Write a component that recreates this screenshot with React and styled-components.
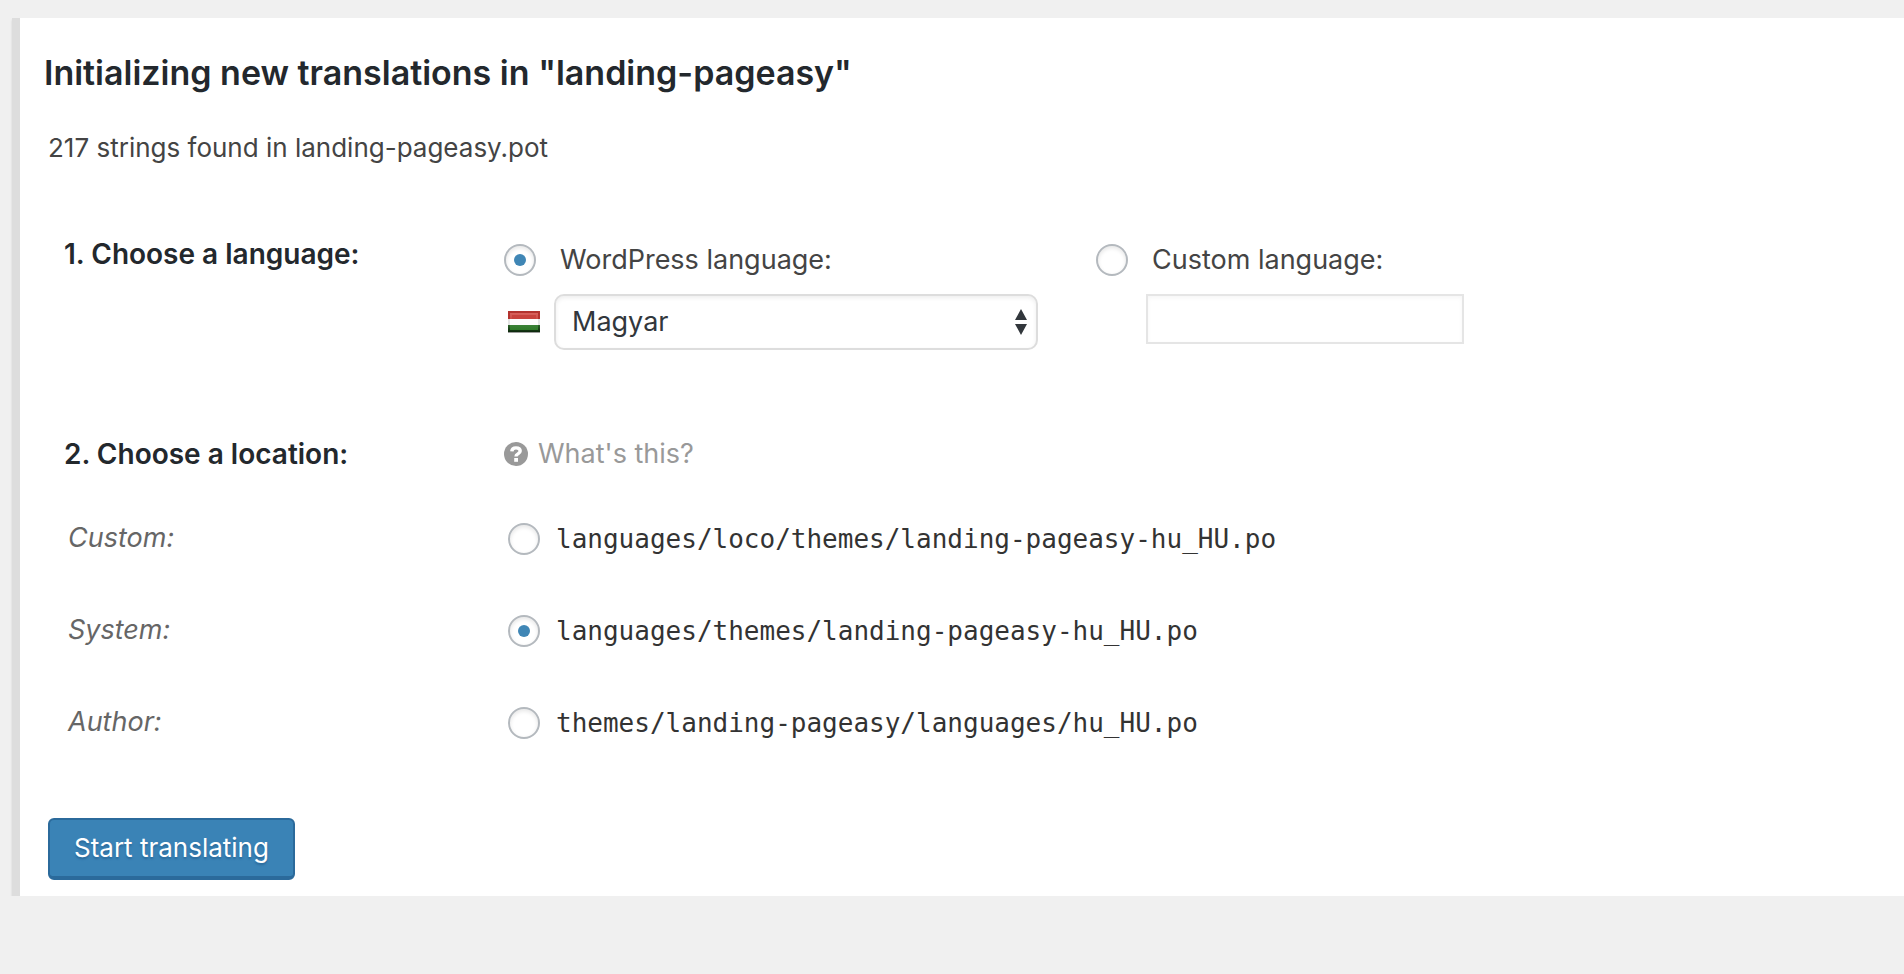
import { useState } from "react";
import styled, { createGlobalStyle } from "styled-components";

const LANGUAGES = [
  { code: "hu_HU", name: "Magyar" },
  { code: "de_DE", name: "Deutsch" },
  { code: "fr_FR", name: "Français" },
];

const App = () => {
  const [source, setSource] = useState("wordpress");
  const [locale, setLocale] = useState("hu_HU");
  const [custom, setCustom] = useState("");
  const [location, setLocation] = useState("system");

  const code = source === "custom" ? custom : locale;

  const locations = [
    {
      id: "custom",
      title: "Custom:",
      path: `languages/loco/themes/landing-pageasy-${code}.po`,
    },
    {
      id: "system",
      title: "System:",
      path: `languages/themes/landing-pageasy-${code}.po`,
    },
    {
      id: "author",
      title: "Author:",
      path: `themes/landing-pageasy/languages/${code}.po`,
    },
  ];

  return (
    <>
      <GlobalStyle />
      <Panel>
        <Title>Initializing new translations in "landing-pageasy"</Title>
        <Summary>217 strings found in landing-pageasy.pot</Summary>

        <form onSubmit={(event) => event.preventDefault()}>
          <LanguageSection>
            <SectionTitle>1. Choose a language:</SectionTitle>
            <Choices>
              <Choice>
                <RadioLabel>
                  <Radio
                    name="source"
                    checked={source === "wordpress"}
                    onChange={() => setSource("wordpress")}
                  />
                  WordPress language:
                </RadioLabel>
                <SelectRow>
                  <Flag />
                  <SelectWrap>
                    <Select
                      aria-label="WordPress language"
                      value={locale}
                      onChange={(event) => setLocale(event.target.value)}
                    >
                      {LANGUAGES.map((language) => (
                        <option key={language.code} value={language.code}>
                          {language.name}
                        </option>
                      ))}
                    </Select>
                    <Arrows />
                  </SelectWrap>
                </SelectRow>
              </Choice>
              <Choice>
                <RadioLabel>
                  <Radio
                    name="source"
                    checked={source === "custom"}
                    onChange={() => setSource("custom")}
                  />
                  Custom language:
                </RadioLabel>
                <TextInput
                  type="text"
                  aria-label="Custom language"
                  value={custom}
                  onChange={(event) => setCustom(event.target.value)}
                />
              </Choice>
            </Choices>
          </LanguageSection>

          <LocationHeader>
            <SectionTitle>2. Choose a location:</SectionTitle>
            <HelpLink href="#help">
              <HelpIcon />
              What's this?
            </HelpLink>
          </LocationHeader>

          <Locations>
            {locations.map(({ id, title, path }) => (
              <LocationRow key={id}>
                <LocationName htmlFor={`location-${id}`}>{title}</LocationName>
                <PathLabel>
                  <Radio
                    id={`location-${id}`}
                    name="location"
                    checked={location === id}
                    onChange={() => setLocation(id)}
                  />
                  <Code>{path}</Code>
                </PathLabel>
              </LocationRow>
            ))}
          </Locations>

          <Submit type="submit">Start translating</Submit>
        </form>
      </Panel>
    </>
  );
};

export default App;

const Flag = () => (
  <svg width="32" height="22" viewBox="0 0 32 22" role="img" aria-label="hu">
    <defs>
      <linearGradient id="red" x1="0" y1="0" x2="0" y2="1">
        <stop offset="0" stopColor="#d8625c" />
        <stop offset="1" stopColor="#cc4a44" />
      </linearGradient>
      <linearGradient id="green" x1="0" y1="0" x2="0" y2="1">
        <stop offset="0" stopColor="#3b8236" />
        <stop offset="1" stopColor="#2f7a2a" />
      </linearGradient>
      <linearGradient id="edge" x1="0" y1="0" x2="0" y2="1">
        <stop offset="0" stopColor="#2c6428" />
        <stop offset="1" stopColor="#0c260c" />
      </linearGradient>
    </defs>
    <rect width="32" height="8" fill="#b3332e" />
    <rect x="2" y="2" width="28" height="6" fill="url(#red)" />
    <rect x="4" y="4" width="24" height="4" fill="#c8433d" />
    <rect y="8" width="32" height="6" fill="#fdfdfd" />
    <rect y="8" width="2" height="6" fill="#e4e4e4" />
    <rect x="30" y="8" width="2" height="6" fill="#e4e4e4" />
    <rect y="14" width="32" height="7" fill="url(#edge)" />
    <rect x="2" y="14" width="28" height="5" fill="url(#green)" />
    <rect y="21" width="32" height="1" fill="#9a9a9a" />
  </svg>
);

const HelpIcon = () => (
  <svg width="24" height="24" viewBox="0 0 24 24" aria-hidden="true">
    <circle cx="12" cy="12" r="12" fill="#999" />
    <path
      d="M7.800 9.400C8 6.800 9.800 5.900 12 5.900c2.600 0 4.200 1.300 4.200 3.200 0 2.900-4.200 2.700-4.200 5.300"
      fill="none"
      stroke="#fff"
      strokeWidth="3.400"
    />
    <rect x="10.200" y="16" width="3.800" height="3.800" fill="#fff" />
  </svg>
);

const ArrowsSvg = ({ className }) => (
  <svg className={className} width="12" height="26" viewBox="0 0 12 26" aria-hidden="true">
    <path d="M6 0l6 11H0zM6 26l6-11H0z" fill="#32373c" />
  </svg>
);

const Arrows = styled(ArrowsSvg)`
  position: absolute;
  top: 15px;
  right: 11px;
  pointer-events: none;
`;

const GlobalStyle = createGlobalStyle`
  * {
    box-sizing: border-box;
  }

  body {
    margin: 0;
    background: #f0f0f0;
    color: #444;
    font-family: Inter, "Liberation Sans", sans-serif;
    font-size: 27px;
    line-height: 36px;
  }
`;

const Panel = styled.main`
  margin: 18px 0 0 12px;
  padding: 32px 0 16px 24px;
  background: #fff;
  border-left: 8px solid #ddd;
  box-shadow: 0 2px 2px rgba(0, 0, 0, 0.12);
`;

const Title = styled.h1`
  margin: 0;
  color: #23282d;
  font-size: 34px;
  font-weight: 600;
  line-height: 46px;
`;

const Summary = styled.p`
  margin: 34px 0 0 4px;
  font-size: 26px;
`;

const Section = styled.section`
  display: grid;
  grid-template-columns: 440px 1fr;
  padding-left: 20px;
`;

const LanguageSection = styled(Section)`
  margin-top: 68px;
`;

const LocationHeader = styled(Section)`
  margin-top: 84px;
`;

const SectionTitle = styled.h2`
  margin: 0;
  color: #23282d;
  font-size: 28px;
  font-weight: 600;
  line-height: 40px;
`;

const Choices = styled.div`
  display: flex;
  flex-wrap: wrap;
  padding-top: 10px;
`;

const Choice = styled.div`
  display: flex;
  flex-direction: column;
  gap: 18px;
  width: 592px;
`;

const RadioLabel = styled.label`
  display: flex;
  align-items: center;
  gap: 24px;
  height: 32px;
`;

const Radio = styled.input.attrs({ type: "radio" })`
  appearance: none;
  display: grid;
  place-items: center;
  flex: none;
  width: 32px;
  height: 32px;
  margin: 0;
  background: #fff;
  border: 2px solid #b4b9be;
  border-radius: 50%;
  box-shadow: inset 0 2px 4px rgba(0, 0, 0, 0.1);

  &:checked::before {
    content: "";
    width: 12px;
    height: 12px;
    border-radius: 50%;
    background: #3f86b5;
  }
`;

const SelectRow = styled.div`
  display: flex;
  align-items: center;
  gap: 14px;
  padding-left: 4px;
`;

const SelectWrap = styled.div`
  position: relative;
  width: 484px;
`;

const Select = styled.select`
  appearance: none;
  display: block;
  width: 100%;
  height: 56px;
  padding: 0 40px 0 16px;
  background: #fff;
  border: 2px solid #ddd;
  border-radius: 10px;
  box-shadow: inset 0 2px 4px rgba(0, 0, 0, 0.07);
  color: #32373c;
  font: inherit;
`;

const TextInput = styled.input`
  width: 318px;
  height: 50px;
  margin-left: 50px;
  padding: 4px 10px;
  background: #fff;
  border: 2px solid #e5e5e5;
  box-shadow: inset 0 2px 4px rgba(0, 0, 0, 0.04);
  color: #32373c;
  font: inherit;
`;

const HelpLink = styled.a`
  display: flex;
  align-items: center;
  justify-self: start;
  gap: 10px;
  color: #999;
  text-decoration: none;
`;

const Locations = styled.div`
  display: grid;
  gap: 60px;
  margin-top: 48px;
`;

const LocationRow = styled.div`
  display: grid;
  grid-template-columns: 440px 1fr;
  align-items: end;
  height: 32px;
  padding-left: 24px;
`;

const LocationName = styled.label`
  padding-bottom: 1px;
  color: #666;
  font-style: italic;
  line-height: 32px;
`;

const PathLabel = styled.label`
  display: flex;
  align-items: center;
  gap: 16px;
  height: 32px;
`;

const Code = styled.code`
  color: #333;
  font-family: "DejaVu Sans Mono", monospace;
  font-size: 26px;
`;

const Submit = styled.button`
  display: block;
  height: 62px;
  margin: 80px 0 0 4px;
  padding: 0 24px;
  background: #3a83b6;
  border: 2px solid #2b6a9b;
  border-bottom-width: 4px;
  border-radius: 6px;
  color: #fff;
  font: inherit;
  font-size: 26px;
  text-shadow: 0 2px 2px #2b6a9b;
  cursor: pointer;
`;
